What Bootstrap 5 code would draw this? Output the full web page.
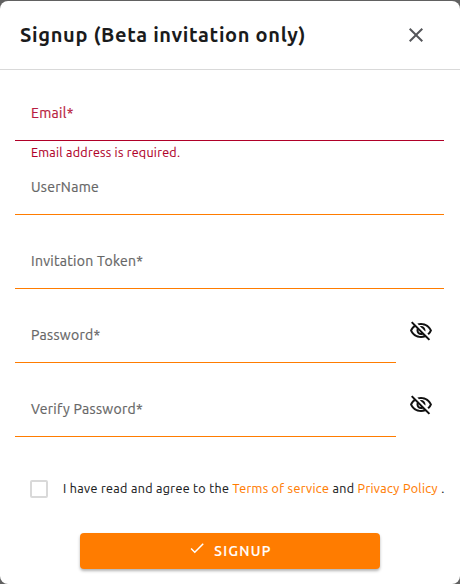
<!DOCTYPE html>
<html lang="en">
<head>
<meta charset="utf-8">
<meta name="viewport" content="width=device-width, initial-scale=1">
<title>Signup</title>
<link href="https://cdn.jsdelivr.net/npm/bootstrap@5.3.0/dist/css/bootstrap.min.css" rel="stylesheet">
<style>
body{background:#616161;font-family:Ubuntu,"Noto Sans","Open Sans",sans-serif;color:#1a1b1c;overflow:hidden}
.dialog{height:583px;margin-top:1px;border-radius:8px}
.dialog-head{height:69px;border-bottom:1px solid #d9d9d9;padding:0 32px 0 20px}
.dialog-title{font-size:20px;font-weight:700;letter-spacing:.67px;line-height:28px}
.dialog-body{padding:15px 16px 0 15px}
.field{height:74px}
.field-box{height:56px;border-bottom:1px solid #ff7c00;padding:2px 0 0 16px;font-size:14px;letter-spacing:.3px;color:#666;-webkit-text-stroke:.2px}
.field-hint{font-size:12.5px;line-height:18px;padding:2px 0 0 16px;letter-spacing:.27px;color:#b00028;-webkit-text-stroke:.1px}
.field.invalid .field-box{border-color:#b00028;color:#b81c40}
.with-eye{width:381px}
.eye{margin:12px 11px 0 0}
.terms{height:60px;padding:7px 0 0 15px;font-size:12.5px;letter-spacing:.35px;-webkit-text-stroke:.1px}
.terms a{color:#ff7c00}
.box{width:18px;height:18px;border:2px solid #d9d9d9;border-radius:2px;margin-right:15px}
.signup-btn,.signup-btn:hover{width:300px;height:36px;margin-top:18px;background:#ff7c00;color:#fff;border-radius:4px;font-size:14px;font-weight:500;letter-spacing:1.35px;box-shadow:0 2px 3px rgba(0,0,0,.3);-webkit-text-stroke:.2px}
.tick{margin:0 8px 6px 1px}
</style>
</head>
<body>
<svg class="d-none">
  <symbol id="eye-off" viewBox="0 0 24 24"><path d="M12 6c3.790 0 7.170 2.130 8.820 5.500-.590 1.220-1.420 2.270-2.410 3.120l1.410 1.410c1.390-1.230 2.490-2.770 3.180-4.530C21.270 7.110 17 4 12 4c-1.270 0-2.490.200-3.640.570l1.650 1.650C10.660 6.090 11.320 6 12 6zm-1.070 1.140L13 9.210c.570.250 1.030.710 1.280 1.280l2.070 2.070c.080-.340.140-.700.140-1.070C16.500 9.010 14.480 7 12 7c-.370 0-.720.050-1.070.140zM2.010 3.870l2.680 2.680C3.060 7.830 1.770 9.530 1 11.500 2.730 15.890 7 19 12 19c1.520 0 2.980-.290 4.320-.820l3.420 3.420 1.410-1.410L3.420 2.450 2.010 3.870zm7.500 7.500l2.610 2.610c-.040.010-.080.020-.120.020-1.380 0-2.500-1.120-2.500-2.500 0-.050.010-.080.010-.130zm-3.400-3.400l1.750 1.750c-.230.550-.360 1.150-.360 1.780 0 2.480 2.020 4.500 4.500 4.500.630 0 1.230-.130 1.770-.360l.980.980c-.880.240-1.800.380-2.750.380-3.790 0-7.170-2.130-8.820-5.500.700-1.430 1.720-2.610 2.930-3.530z"/></symbol>
</svg>
<main class="dialog bg-white">
  <header class="dialog-head d-flex align-items-center justify-content-between">
    <h1 class="dialog-title mb-0">Signup (Beta invitation only)</h1>
    <button class="btn p-0 border-0 d-flex" aria-label="Close"><svg width="24" height="24" viewBox="0 0 24 24" fill="#55565a"><path d="M19 6.41 17.59 5 12 10.59 6.41 5 5 6.41 10.59 12 5 17.59 6.41 19 12 13.41 17.59 19 19 17.59 13.41 12z"/></svg></button>
  </header>
  <form class="dialog-body">
    <div class="field invalid"><div class="field-box d-flex align-items-center">Email*</div><div class="field-hint">Email address is required.</div></div>
    <div class="field"><div class="field-box d-flex align-items-center">UserName</div></div>
    <div class="field"><div class="field-box d-flex align-items-center">Invitation Token*</div></div>
    <div class="d-flex justify-content-between">
      <div class="field with-eye"><div class="field-box d-flex align-items-center">Password*</div></div>
      <svg class="eye" width="24" height="24" fill="#111"><use href="#eye-off"/></svg>
    </div>
    <div class="d-flex justify-content-between">
      <div class="field with-eye"><div class="field-box d-flex align-items-center">Verify Password*</div></div>
      <svg class="eye" width="24" height="24" fill="#111"><use href="#eye-off"/></svg>
    </div>
    <div class="terms d-flex align-items-center text-nowrap"><span class="box flex-shrink-0"></span><span>I have read and agree to the <a href="#" class="text-decoration-none">Terms of service</a> and <a href="#" class="text-decoration-none">Privacy Policy</a> .</span></div>
    <button type="button" class="signup-btn btn border-0 p-0 d-flex align-items-center justify-content-center mx-auto"><svg class="tick" width="18" height="18" viewBox="0 0 24 24" fill="#fff"><path d="M9 16.170 4.830 12l-1.420 1.410L9 19 21 7l-1.410-1.410z"/></svg>SIGNUP</button>
  </form>
</main>
<script src="https://cdn.jsdelivr.net/npm/bootstrap@5.3.0/dist/js/bootstrap.bundle.min.js"></script>
</body>
</html>
